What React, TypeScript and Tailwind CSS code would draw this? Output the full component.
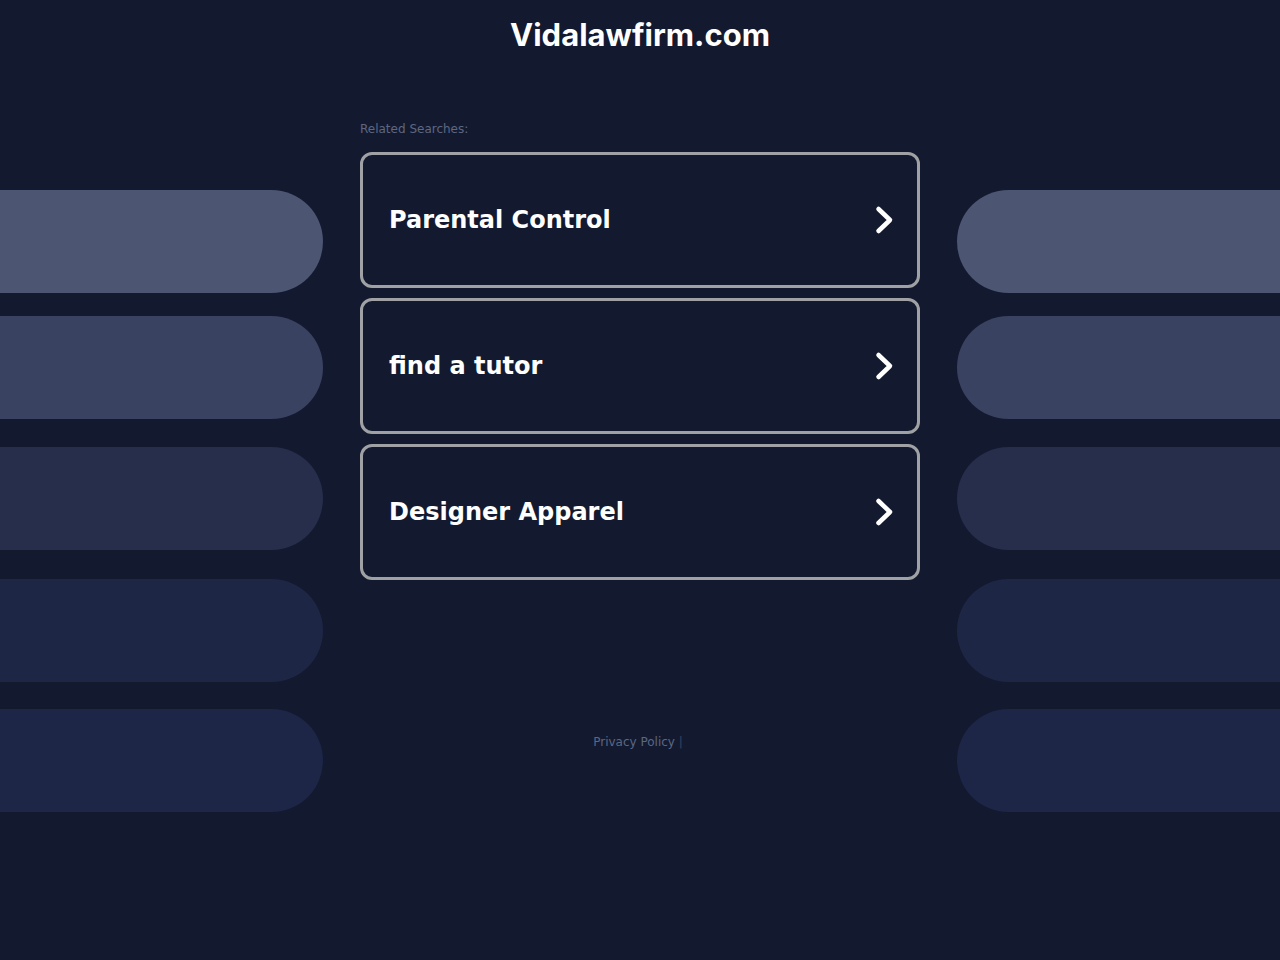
import React from "react";

const searches = ["Parental Control", "find a tutor", "Designer Apparel"];

const pills = [
  { color: "bg-[#4c5673]", mt: "mt-[190px]" },
  { color: "bg-[#3a4261]", mt: "mt-[23px]" },
  { color: "bg-[#262e4c]", mt: "mt-[28px]" },
  { color: "bg-[#1e2646]", mt: "mt-[29px]" },
  { color: "bg-[#1d2647]", mt: "mt-[27px]" },
];

function Chevron() {
  return (
    <svg width="24" height="30" viewBox="0 0 24 30" fill="none">
      <path
        d="M5.5 4 L17 15 L5.5 26"
        stroke="white"
        strokeWidth="4.5"
        strokeLinecap="round"
        strokeLinejoin="round"
      />
    </svg>
  );
}

function PillColumn({ side }: { side: "left" | "right" }) {
  return (
    <div className="flex w-[323px] shrink-0 flex-col">
      {pills.map((p, i) => (
        <div
          key={i}
          className={`h-[103px] ${p.color} ${p.mt} ${
            side === "left" ? "rounded-r-[52px]" : "rounded-l-[52px]"
          }`}
        />
      ))}
    </div>
  );
}

export default function App() {
  return (
    <div
      className="relative min-h-[960px] w-full bg-[#131a2f]"
      style={{ fontFamily: "'DejaVu Sans', sans-serif" }}
    >
      <h1
        className="absolute left-0 right-0 top-[14px] text-center text-[31px] font-bold leading-[42px] text-white"
        style={{ fontFamily: "Inter, sans-serif" }}
      >
        Vidalawfirm.com
      </h1>
      <div className="flex">
        <PillColumn side="left" />
        <div className="ml-[37px] w-[560px] shrink-0 pt-[122px]">
          <p className="text-[12px] leading-[15px] text-[#5d6682]">Related Searches:</p>
          <div className="mt-[15px] flex flex-col gap-[10px]">
            {searches.map((s) => (
              <div
                key={s}
                className="flex h-[136px] items-center justify-between rounded-[12px] border-[3px] border-[#a0a1a5] pl-[26px] pr-[20px]"
              >
                <span className="text-[24px] font-bold text-white">{s}</span>
                <Chevron />
              </div>
            ))}
          </div>
          <p className="mt-[155px] pr-[4px] text-center text-[12px] leading-[15px] text-[#5d6682]">
            Privacy Policy <span className="text-[#3a4261]">|</span>
          </p>
        </div>
        <div className="ml-auto">
          <PillColumn side="right" />
        </div>
      </div>
    </div>
  );
}
